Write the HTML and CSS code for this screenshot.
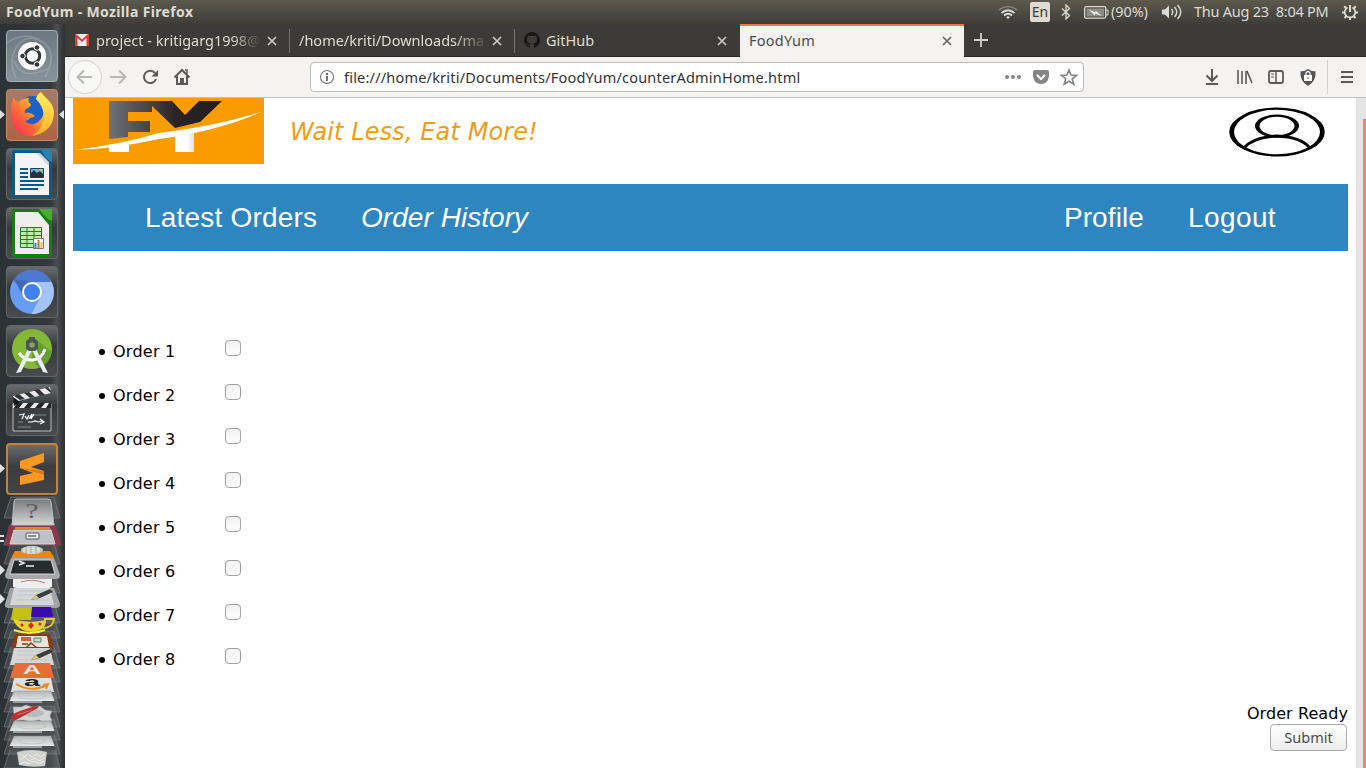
FILE: index.html
```html
<!DOCTYPE html>
<html lang="en">
<head>
<meta charset="utf-8">
<title>FoodYum</title>
<link rel="stylesheet" href="styles.css">
</head>
<body>
<header class="panel">
  <span class="panel-title">FoodYum - Mozilla Firefox</span>
  <div class="indicators">
    <svg class="ind-wifi" width="20" height="16" viewBox="0 0 20 16" fill="none" stroke-width="1.700"><path d="M1 6Q10-1 19 6" stroke="#86837b"/><path d="M3.500 9Q10 3.500 16.500 9M6 11.500Q10 8 14 11.500" stroke="#dfdbd2"/><path d="M8 13l2 2 2-2q-2-1.500-4 0z" fill="#dfdbd2"/></svg>
    <span class="lang">En</span>
    <svg class="ind-bt" width="10" height="16" viewBox="0 0 10 16" fill="none" stroke="#dfdbd2" stroke-width="1.300"><path d="M1 4.500l7.500 7L5 15V1l3.500 3.500L1 11.500"/></svg>
    <svg class="ind-bat" width="25" height="13" viewBox="0 0 25 13"><rect x=".7" y=".7" width="21" height="11.500" rx="1.500" fill="none" stroke="#dfdbd2" stroke-width="1.300"/><path d="M22 4h2v5h-2" fill="none" stroke="#dfdbd2"/><rect x="2.500" y="2.500" width="17.500" height="8" fill="#8f8c85"/><path d="M4.500 3.500l7 3V4.500l6.500 5.500-7-2.500v2z" fill="#f0ece4"/></svg>
    <span class="pct">(90%)</span>
    <svg class="ind-vol" width="21" height="16" viewBox="0 0 21 16" fill="none" stroke="#dfdbd2" stroke-width="1.400"><path d="M0 5.500h3l4-4v13l-4-4H0z" fill="#dfdbd2" stroke="none"/><path d="M9.500 5q2.500 3 0 6M12.500 3q4.500 5 0 10M15.500 1q6.500 7 0 14"/></svg>
    <span class="clock">Thu Aug 23&nbsp; 8:04 PM</span>
    <svg class="ind-gear" width="16" height="16" viewBox="0 0 16 16" fill="none" stroke="#dfdbd2"><path d="M5.500 3.500a5.300 5.300 0 1 0 5 0" stroke-width="1.700"/><path d="M8 1v7" stroke-width="2"/><path d="M2.200 2.200l2 2M13.800 2.200l-2 2M0 8.500h3M13 8.500h3M2.500 14l2-2M13.500 14l-2-2M8 13.500V16" stroke-width="2"/></svg>
  </div>
</header>
<div class="desktop">
  <aside class="launcher">
    <div class="tile tile-dash"><svg viewBox="6 30 52 52"><g fill="none" stroke="#b9c2c6" stroke-opacity=".35" stroke-width="1.500"><path d="M16 78C5 55 20 34 36 39S56 59 45 77M7 43Q25 30 43 42 55 51 49 69M14 60Q20 82 50 68"/></g><circle cx="32" cy="56" r="14" fill="#fff"/><circle cx="32.500" cy="56" r="7.200" fill="none" stroke="#33383b" stroke-width="3"/><g fill="#33383b" stroke="#fff"><circle cx="22.500" cy="56" r="2.800"/><circle cx="37" cy="47.500" r="2.800"/><circle cx="37" cy="64.500" r="2.800"/></g></svg></div>
    <div class="tile tile-fox"><svg viewBox="6 89 52 52"><defs><linearGradient id="ff" x1="1" x2="0" y1="0" y2="1"><stop offset="0" stop-color="#ffef55"/><stop offset=".35" stop-color="#ffa329"/><stop offset=".62" stop-color="#ff603b"/><stop offset="1" stop-color="#ed2166"/></linearGradient><linearGradient id="flame" x2="0" y2="1"><stop offset="0" stop-color="#fff261"/><stop offset="1" stop-color="#ffae27"/></linearGradient></defs><circle cx="33" cy="113" r="17" fill="#1b61c8"/><path d="M13 97q2 4 5 5 5-4 11-4-2 4 2 6 0 3-5 5-2 2-1 4 5-2 10 3-2 2-5 2-2 3-5 3 5 6 13 1 6-5 6-12 4 8 0 17-5 9-14 9-15-1-19-17-1-8 2-22z" fill="url(#ff)"/><path d="M36 99q1-5 5-7l4 5q8 6 9 15 0 20-22 24 11-7 12-20-1-10-8-17z" fill="url(#flame)"/></svg></div>
    <div class="tile tile-dark"><svg viewBox="6 148 52 52"><path d="M14 150h28l10 11v35q0 2-2 2H14q-2 0-2-2v-44q0-2 2-2z" fill="#075b8c"/><path d="M41 149.500h11V162q-5-1-11-12.500z" fill="#2980b3"/><path d="M15 153h23l11 12v30H15z" fill="#f2f3f4"/><path d="M36 153l13 13v-4l-9-9z" fill="#d2d6da"/><g fill="#075b8c"><path d="M20 168h8v2h-8zM20 172h8v2h-8zM20 176h8v2h-8zM20 180h24v2H20zM20 184h24v2H20zM20 188h18v2H20z"/></g><path d="M30.500 168.500h13v9h-13z" fill="#70b8e6" stroke="#163f59"/><path d="M31 177v-4l3-3 3 3 3-2 3 3v3z" fill="#273338"/><circle cx="41" cy="170" r="1.200" fill="#f6c735"/></svg></div>
    <div class="tile tile-dark"><svg viewBox="6 207 52 52"><path d="M14 209h28l10 11v35q0 2-2 2H14q-2 0-2-2v-44q0-2 2-2z" fill="#187d10"/><path d="M39 209h13v12q-5-1-13-12z" fill="#44b12e"/><path d="M15 212h23l11 13v29H15z" fill="#eee"/><path d="M20 227h22v20H20z" fill="#baf0aa"/><path d="M20.500 227.500h21v20h-21zM20 231.500h22M20 235.500h22M20 239.500h22M20 243.500h22M27 227v20M34 227v20" fill="none" stroke="#148313"/><path d="M33.500 238.500h10v10h-10z" fill="#fff" stroke="#777"/><path d="M34.500 243h2v5h-2z" fill="#1a8cd5"/><path d="M37.500 240h2v8h-2z" fill="#e06529"/><path d="M40.500 242h2v6h-2z" fill="#f1bf34"/></svg></div>
    <div class="tile tile-dark"><svg viewBox="6 266 52 52"><circle cx="32" cy="292" r="22" fill="#659df5"/><path d="M32 292L13 281a22 22 0 0 1 38 0z" fill="#4c78cf"/><path d="M32 282h19.500a22 22 0 0 1-20 32l9-17z" fill="#a4c3fb"/><path d="M14 279l9 17 9-5-1-9z" fill="#4268b6"/><circle cx="32" cy="292" r="9" fill="#3f82ee" stroke="#fff" stroke-width="2"/></svg></div>
    <div class="tile tile-dark"><svg viewBox="6 325 52 52"><circle cx="32" cy="349" r="20" fill="#83b936"/><path d="M33 337l19 15q-3 14-13 16l-7-9z" fill="#4f8b2d" opacity=".55"/><path d="M19 353q6 8 14 7 9-1 12-11" fill="none" stroke="#fff" stroke-width="3"/><path d="M29 347l3 3-11 22-5 1zM35 347l-3 3 11 22 5 1z" fill="#eceff0"/><path d="M29 339v-2h6v2l3 2v8l-3 2h-6l-3-2v-8z" fill="#4d5655"/><circle cx="32" cy="345" r="2.700" fill="#92a05e"/></svg></div>
    <div class="tile tile-dark"><svg viewBox="6 384 52 52"><path d="M13 404h38v27H13z" fill="#3d3e3f" stroke="#bbb"/><path d="M13 396l37-9 1 6-37 9z" fill="#ededed"/><path d="M19 394l6 5-5 1-6-4zM29 392l6 5-5 1-6-5zM39 389l6 6-5 1-6-6zM48 387l3 4v2l-6-5z" fill="#333"/><path d="M13 403h38v5H13z" fill="#eee"/><path d="M17 403h6l-4 5h-5zM28 403h6l-4 5h-6zM39 403h6l-4 5h-6zM49 403h2v5h-5z" fill="#252525"/><path d="M13 397l7 5-6 4z" fill="#111"/><path d="M19 415l5-1-2 5M25 416l2 3 2-4M29 419l3-5-1 5 3-5M28 422h4l3-1 3 1 5-1M40 419l4 3-4 2" fill="none" stroke="#fff" stroke-width="1.200"/><path d="M18 427h13M18 422h5M34 415h12" stroke="#888"/></svg></div>
    <div class="tile tile-sublime"><svg viewBox="6 443 52 52"><path d="M20 461l24-8v9l-13 5 13 4v9l-24 5v-9l13-3-13-5z" fill="#ff9821"/><path d="M20 468l24 3v4l-10-3z" fill="#df791c"/></svg></div>
    <svg class="stack" width="65" height="272" viewBox="0 496 65 272">
      <defs>
        <linearGradient id="steel" x2="0" y2="1"><stop offset="0" stop-color="#777a7b"/><stop offset="1" stop-color="#d5d6d7"/></linearGradient>
        <linearGradient id="lid" x2="0" y2="1"><stop offset="0" stop-color="#b4b6b7"/><stop offset="1" stop-color="#eceded"/></linearGradient>
        <g id="glass"><path d="M11 0h43l6 21H4z" fill="#a3a9ab" fill-opacity=".18" stroke="#7d8385" stroke-opacity=".6"/></g>
        <g id="drive"><path d="M14 0h37l4 11H9z" fill="url(#lid)" stroke="#848686" stroke-width=".5"/><ellipse cx="32" cy="5" rx="14" ry="3" fill="none" stroke="#bbb" stroke-width=".7"/><path d="M9 10h46v4q-21 2-46 0z" fill="#4b4f51"/><path d="M13 11h29" stroke="#eee"/></g>
        <g id="pencil"><path d="M14 0h36l4 17H10z" fill="#d4d6d7"/><path d="M18 3h27M17 7h24M16 12h34" stroke="#bcbfc2" stroke-width=".7"/><path d="M31 12l5-5 14-6 3 3-13 6z" fill="#3b3f39"/><path d="M31 12l5-5 3 3z" fill="#dfcc70"/></g>
      </defs>
      <use href="#glass" y="497"/><use href="#glass" y="524"/><use href="#glass" y="543"/><use href="#glass" y="572"/><use href="#glass" y="602"/><use href="#glass" y="617"/><use href="#glass" y="631"/><use href="#glass" y="647"/><use href="#glass" y="661"/><use href="#glass" y="677"/><use href="#glass" y="691"/><use href="#glass" y="706"/><use href="#glass" y="719"/><use href="#glass" y="733"/><use href="#glass" y="747"/>
      <path d="M9 525h46l6 17q0 4-4 4H9q-5 0-4-4z" fill="#88394c"/>
      <path d="M14 502q0-3 3-3h31q3 0 3 3l3 23H12z" fill="url(#steel)" stroke="#bcbdbe"/>
      <text x="32" y="518" class="question" textLength="13" lengthAdjust="spacingAndGlyphs">?</text>
      <path d="M15 527h35v2H15z" fill="#dc813c"/><path d="M14 530h37l4 14H10z" fill="#bfc1c2" stroke="#d6d6d6"/><rect x="26" y="533" width="13" height="6" rx="1" fill="#eee" stroke="#555"/><path d="M28 535h8v2h-8z" fill="#888"/>
      <path d="M15 551h35l4 6q0 2-3 2H14q-3 0-2-3z" fill="#ee8516"/><ellipse cx="32" cy="550" rx="11" ry="4" fill="#dbd9d5"/><path d="M22 548v5M26 547v6M31 546v7M36 547v6M41 548v5" stroke="#aaa"/>
      <path d="M11 558h43l6 17q0 4-4 4H9q-4 0-4-4z" fill="#a5a7a8"/><path d="M14 560h37l4 14H10z" fill="#262b2c" stroke="#d3d4d4"/><path d="M19 561l5 2-5 2M26 566h8" fill="none" stroke="#eee" stroke-width="1.500"/>
      <path d="M13 579h39v7q0 2-5 2H17q-5 0-4-3z" fill="#eee"/><path d="M21 582q12-4 24 1" fill="none" stroke="#cf7676"/>
      <path d="M10 588h44l6 16q0 4-4 4H9q-5 0-4-4z" fill="#a2a5a7"/><use href="#pencil" y="588"/>
      <path d="M13 608l20-1-2 13H11z" fill="#c2c114"/><path d="M32 607h19l2 10H31z" fill="#3b0cab"/><path d="M13 619q4 12 19 13 14-1 14-12-17 4-33-1z" fill="#e8d42d"/><path d="M44 619h10q-1 9-11 9" fill="none" stroke="#e8c824" stroke-width="2"/><g fill="#d32b2b"><circle cx="22" cy="625" r="1.500"/><path d="M31 622l3 3.500-3 3.500-3-3.500z"/><circle cx="40" cy="624" r="1.500"/></g><path d="M14 630q16 6 31 0" fill="none" stroke="#f6e859" stroke-width="2"/>
      <path d="M15 634h35l4 15H11z" fill="#873b19"/><path d="M18 636h29l2 11H16z" fill="#e9e4d9"/><path d="M21 637h10v4H21z" fill="#d46237"/><path d="M34 638h7v4h-7z" fill="#c7dac2" stroke="#568568"/><path d="M22 644h6M26 648l5-5 6 5" stroke="#873b19" fill="none" stroke-width="1.500"/>
      <use href="#pencil" y="648"/>
      <path d="M15 663h35l4 15H10z" fill="#e86c35"/><text x="32" y="673.500" class="store-letter" textLength="18" lengthAdjust="spacingAndGlyphs">A</text>
      <path d="M14 678h37l3 14H11z" fill="#dedfdf"/><text x="32" y="686" class="amazon-letter" textLength="16" lengthAdjust="spacingAndGlyphs">a</text><path d="M16 684q15 9 31 1M43 685l5-1-2 5" fill="none" stroke="#f18b1b" stroke-width="2"/>
      <use href="#drive" y="691"/>
      <path d="M13 707h8l5-2 6 2 8-1 5 4 7 1-2 5 2 5-9 1-4-2-8 2-8-2-8 1z" fill="#d3d5d5" stroke="#909394" stroke-width=".6"/><ellipse cx="33" cy="713" rx="11" ry="4" fill="#b7bbbc"/><path d="M11 717q2-4 9-6l15-5q5-1 3 2L16 720q-5 2-5-3z" fill="#bd3034"/><path d="M17 715l15-5" stroke="#e56660"/>
      <use href="#drive" y="721"/><use href="#drive" y="736"/>
      <path d="M17 752q15-4 30 0l-2 14q-13 2-26-1z" fill="#cfd0ce"/><path d="M20 754l4 3 3-3 5 3 4-3 5 3 4-3M20 760l5-3 4 4 6-3 4 3 5-3M20 764l4-2 5 2 5-3 5 3 5-3" fill="none" stroke="#eeeeeb"/>
      <g fill="#e1e2e2"><path d="M0 565l5 5-5 5zM0 594l5 5-5 5zM0 535h4v2H0zM0 540h4v2H0z"/></g>
    </svg>
    <svg class="arrows" viewBox="0 24 65 480"><g fill="#dfe1e1"><path d="M0 110l5 4.500-5 4.500zM64 110l-5 4.500 5 4.500zM0 464l5 4.500-5 4.500z"/></g></svg>
  </aside>
  <main class="browser">
    <div class="tabs">
      <div class="tab tab-gmail"><svg width="14" height="12" viewBox="0 0 14 12"><path d="M0 0h14v12H0z" fill="#eee"/><path d="M0 12V0h1l6 5.500L13 0h1v12h-2.500V4L7 8 2.500 4v8z" fill="#d93f35"/></svg><span class="tab-text fade t1">project - kritigarg1998@</span><svg class="close" width="10" height="10" viewBox="0 0 10 10"><path d="M1 1l8 8M9 1L1 9"/></svg></div>
      <div class="tab tab-file"><span class="tab-text fade t2">/home/kriti/Downloads/ma</span><svg class="close" width="10" height="10" viewBox="0 0 10 10"><path d="M1 1l8 8M9 1L1 9"/></svg></div>
      <div class="tab tab-git"><svg width="16" height="16" viewBox="0 0 16 16"><path fill="#161616" d="M8 0a8 8 0 0 0-2.500 15.600c.4.100.5-.2.500-.4v-1.500c-2.200.5-2.700-1-2.700-1-.4-.9-.9-1.200-.9-1.200-.7-.5.100-.5.100-.5.800.1 1.200.8 1.200.8.700 1.200 1.900.9 2.300.7.100-.5.300-.9.500-1.100-1.800-.2-3.600-.9-3.600-4 0-.9.300-1.600.8-2.100-.1-.2-.4-1 .1-2.100 0 0 .7-.2 2.200.8a7.700 7.700 0 0 1 4 0c1.500-1 2.200-.8 2.200-.8.500 1.100.2 1.900.1 2.100.5.600.8 1.300.8 2.100 0 3.100-1.900 3.800-3.700 4 .3.300.6.800.6 1.500v2.300c0 .2.100.5.500.4A8 8 0 0 0 8 0z"/></svg><span class="tab-text t3">GitHub</span><svg class="close" width="10" height="10" viewBox="0 0 10 10"><path d="M1 1l8 8M9 1L1 9"/></svg></div>
      <div class="tab active"><span class="tab-text t4">FoodYum</span><svg class="close" width="10" height="10" viewBox="0 0 10 10"><path d="M1 1l8 8M9 1L1 9"/></svg></div>
      <svg class="plus" width="14" height="14" viewBox="0 0 14 14"><path d="M7 0v14M0 7h14" stroke="#d3d0c9" stroke-width="1.800"/></svg>
    </div>
    <div class="toolbar">
      <svg class="nav-icons" width="130" height="40" viewBox="65 57 130 40" fill="none" stroke-width="2"><circle cx="85" cy="77" r="16.500" fill="#f8f8f7" stroke="#d5d4d2" stroke-width="1"/><path d="M92 77H78M84 70.500L77.500 77l6.500 6.500M110 77h15M119 70.500l6.500 6.500-6.500 6.500" stroke="#b8b8b6"/><path d="M155 73a6.200 6.200 0 1 0 1 6" stroke="#5b5b5b"/><path d="M158 70v6.500h-6.500z" fill="#5b5b5b"/><path d="M174.500 77.500l7.500-7.500 7.500 7.500M177 76v8h10v-8" stroke="#5b5b5b"/><path d="M180 78h4v6h-4z" fill="#5b5b5b"/><path d="M185 70h2v4" stroke="#5b5b5b" stroke-width="1.500"/></svg>
      <div class="url"><svg width="16" height="16" viewBox="0 0 16 16"><circle cx="8" cy="8" r="6.500" fill="none" stroke="#777" stroke-width="1.100"/><path d="M7 7h2v5H7zM7 4h2v2H7z" fill="#777"/></svg><span class="url-text">file:///home/kriti/Documents/FoodYum/counterAdminHome.html</span>
        <svg class="url-icons" width="76" height="20" viewBox="1003 67 76 20"><g fill="#858585"><circle cx="1007" cy="77" r="2"/><circle cx="1013" cy="77" r="2"/><circle cx="1019" cy="77" r="2"/><path d="M1035 70h12q2 0 2 2v4q-1 8-8 8t-8-8v-4q0-2 2-2z"/></g><path d="M1037 75l4 4 4-4" fill="none" stroke="#fff" stroke-width="2"/><path d="M1069 70l2 5 5.500.4-4.200 3.500 1.400 5.300-4.700-2.900-4.700 2.900 1.400-5.300-4.200-3.500 5.500-.4z" fill="none" stroke="#858585" stroke-width="1.700"/></svg>
      </div>
      <svg class="tools" width="156" height="40" viewBox="1200 57 156 40" fill="none" stroke="#5b5b5b" stroke-width="2"><path d="M1212 69v12M1206.500 75.500l5.500 5.500 5.500-5.500M1206 84h12"/><path d="M1238 70v14M1242 71v13M1246 71v13M1247 71l5 12" stroke-width="1.600"/><rect x="1269" y="71" width="14" height="12" rx="2" stroke-width="1.800"/><path d="M1276 71v12" stroke-width="1.500"/><path d="M1271 74h3M1271 77h3" stroke-width="1"/><path d="M1308 69q4 3 7.500 2 1 10-7.500 15-8.500-5-7.500-15 3.500 1 7.500-2z" fill="#555" stroke="none"/><path d="M1304 75h8v6h-8z" fill="#fff" stroke="none"/><path d="M1306 76v-3q2-3 4 0v3" stroke="#fff" stroke-width="1.300"/><path d="M1308 77v2" stroke-width="1"/><path d="M1327.500 60v34" stroke="#d2d1cf" stroke-width="1"/><path d="M1341 72h12M1341 77h12M1341 82h12"/></svg>
    </div>
    <div class="viewport">
      <div class="page">
        <div class="brand">
          <svg class="logo" width="191" height="66" viewBox="73 98 191 66"><defs><linearGradient id="metal"><stop offset="0" stop-color="#70717a"/><stop offset=".6" stop-color="#2a2325"/><stop offset="1" stop-color="#201e1f"/></linearGradient><radialGradient id="glow" cx=".5" cy=".8" r=".5"><stop offset="0" stop-color="#f5b000"/><stop offset="1" stop-color="#fa9c00"/></radialGradient><linearGradient id="pearl"><stop offset=".6" stop-color="#fff"/><stop offset="1" stop-color="#e2e2e2"/></linearGradient></defs><path d="M73 98h191v66H73z" fill="#fa9c00"/><ellipse cx="169" cy="166" rx="73" ry="12" fill="url(#glow)"/><path d="M109 101h63l13 14 14-14h23l-22 21-25 6-23-22v6h-24v9h22v11h-22v5l-19 2z" fill="url(#metal)"/><path d="M109 145l20-3v10h-20z" fill="#fff"/><path d="M175 134l19-4v22h-19z" fill="url(#pearl)"/><path d="M75 150q42-5 84-17 57-7 102-21-43 19-102 27-45 10-84 11z" fill="#fff"/></svg>
          <span class="slogan">Wait Less, Eat More!</span>
          <svg class="avatar" width="98" height="52" viewBox="1228 106 98 52" fill="none" stroke="#000"><path fill="#000" stroke="none" fill-rule="evenodd" d="M1229.300 132a47.700 24.500 0 1 0 95.400 0a47.700 24.500 0 1 0-95.400 0zM1234 132a43 22.300 0 1 0 86 0a43 22.300 0 1 0-86 0zM1255 126a22 11.500 0 1 0 44 0a22 11.500 0 1 0-44 0zM1259.500 126a17.500 9.300 0 1 0 35 0a17.500 9.300 0 1 0-35 0z"/><path d="M1244 148q9-11 33-12 24 1 33 12" stroke-width="2.800"/></svg>
        </div>
        <nav class="site-nav"><span class="latest">Latest Orders</span><span class="history">Order History</span><span class="profile">Profile</span><span class="logout">Logout</span></nav>
        <ul class="orders">
          <li><span>Order 1</span><i class="box"></i></li><li><span>Order 2</span><i class="box"></i></li><li><span>Order 3</span><i class="box"></i></li><li><span>Order 4</span><i class="box"></i></li><li><span>Order 5</span><i class="box"></i></li><li><span>Order 6</span><i class="box"></i></li><li><span>Order 7</span><i class="box"></i></li><li><span>Order 8</span><i class="box"></i></li>
        </ul>
        <div class="ready"><span>Order Ready</span><button class="submit">Submit</button></div>
      </div>
      <div class="scroll"><div class="thumb"></div></div>
    </div>
  </main>
</div>
</body>
</html>
```
FILE: styles.css
```css
*{box-sizing:border-box}
body{margin:0;width:1366px;height:768px;overflow:hidden;background:#fff;font-family:"Noto Sans","DejaVu Sans",sans-serif;white-space:nowrap}
svg{display:block;flex:none}
.panel{height:24px;display:flex;align-items:center;justify-content:space-between;padding:0 8px 0 6px;background:linear-gradient(#5d594e,#3e3d39);color:#dfdbd2}
.panel-title{font-weight:700;font-size:14px;letter-spacing:.36px;line-height:20px}
.indicators{display:flex;align-items:center;font-size:14.500px}
.indicators span:not(.lang){line-height:20px;padding-bottom:2px}
.lang{width:20px;height:20px;margin-left:12px;background:#dfdbd2;color:#3e3d39;border-radius:2px;font-size:14px;line-height:20px;text-align:center}
.ind-bt{margin-left:11px}
.ind-bat{margin-left:13px}
.pct{width:40px;margin-left:2px;letter-spacing:-.1px}
.ind-vol{margin-left:11px}
.clock{width:136px;margin-left:11px;letter-spacing:-.25px}
.ind-gear{margin-left:12px}
.desktop{display:flex;height:744px}
.launcher{position:relative;width:65px;flex:none;padding:6px 0 0 6px;background:linear-gradient(90deg,#2b3236,#33393c 78%,#4b4f51 88%,#2b2f32);display:flex;flex-direction:column;gap:7px;overflow:hidden}
.tile{width:52px;height:52px;flex:none;border-radius:4px;border:1px solid #72787a;overflow:hidden}
.tile svg{width:52px;height:52px;margin:-1px}
.tile-dash{background:linear-gradient(#6c7980,#87939a);border-color:#a6afb3}
.tile-fox{background:linear-gradient(#a57b69,#ae6543);border-color:#c98a6c}
.tile-dark{background:linear-gradient(#676b6d,#35393b 40%,#484c4e);border-color:#606567}
.tile-sublime{background:linear-gradient(#696b6d,#3b3d40 45%,#414346);border:2px solid #c28141}
.tile-sublime svg{margin:-2px}
.stack{margin:-6px 0 0 -6px}
.arrows{position:absolute;left:0;top:0;width:65px;height:480px}
.question{font:21px "Liberation Serif",serif;text-anchor:middle;fill:#5b5f61}
.store-letter{font:700 12px "Liberation Sans",sans-serif;text-anchor:middle;fill:#f3e9e0}
.amazon-letter{font:700 13px "Liberation Sans",sans-serif;text-anchor:middle;fill:#222}
.browser{width:1301px;display:flex;flex-direction:column}
.tabs{height:33px;background:#3c3b37;display:flex;border-bottom:1px solid #282825}
.tab{width:225px;display:flex;align-items:center;position:relative;color:#dfdbd2}
.tab-gmail{padding-left:10px}
.tab-file,.tab-git{padding-left:9px}
.tab-gmail:after,.tab-file:after{content:"";position:absolute;right:0;top:5px;width:1px;height:24px;background:#74726c}
.tab-text{font-size:14.500px;line-height:20px}
.tab-gmail .tab-text{margin-left:7px;width:165px}
.tab-file .tab-text{width:190px}
.tab-git .tab-text{margin-left:6px}
.fade{overflow:hidden;-webkit-mask-image:linear-gradient(90deg,#000 82%,transparent)}
.close{position:absolute;right:13px;top:12px;fill:none;stroke:#cdcac3;stroke-width:1.700}
.active{width:224px;height:33px;background:#f4f3f1;border-top:2px solid #f07746;padding:0 0 3px 9px;color:#4c4c4c}
.t4{letter-spacing:.25px}
.active .close{top:10px;right:12px;stroke:#666}
.plus{margin:9px 0 0 10px}
.toolbar{height:41px;background:#f4f3f1;border-bottom:1px solid #c3c1bd;display:flex;align-items:flex-start}
.url{width:774px;height:30px;margin:5px 0 0 115px;border:1px solid #bebdba;border-radius:4px;background:#fff;display:flex;align-items:center;padding:0 4px 0 8px;color:#333}
.url-text{font-size:14.500px;margin-left:9px;letter-spacing:.2px}
.url-icons{margin-left:auto}
.tools{margin-left:116px}
.viewport{height:670px;display:flex;font-family:"DejaVu Sans",sans-serif}
.page{width:1291px;padding:0 8px;display:flex;flex-direction:column}
.brand{height:86px;display:flex;align-items:flex-start}
.slogan{font-size:24px;font-style:oblique;letter-spacing:.1px;color:#f39c12;margin:19px 0 0 26px;line-height:30px;width:260px}
.avatar{margin:8px 22px 0 auto}
.site-nav{height:67px;background:#2e86c1;color:#fff;display:flex;align-items:center;padding:0 72px;font:28px "Liberation Sans",sans-serif}
.latest{width:172px;letter-spacing:.2px}
.history{font-style:italic;margin-left:44px;letter-spacing:.05px}
.profile{margin-left:auto;letter-spacing:.1px}
.logout{width:88px;margin-left:44px;letter-spacing:.4px}
.orders{margin:79px 0 0;padding:0 0 0 25px;list-style:none;font-size:16px}
.orders li{height:44px;line-height:44px;display:flex;align-items:center}
.orders li:before{content:"";width:6px;height:6px;border-radius:50%;background:#000;margin:0 8px 0 1px;flex:none}
.orders span{width:112px;letter-spacing:.25px}
.box{width:16px;height:16px;border:1px solid #a0a0a0;border-radius:4px;background:linear-gradient(#f3f3f3,#fff);margin:-9px 0 0}
.ready{display:flex;flex-direction:column;align-items:flex-end;margin-top:22px;font-size:16px;line-height:19px}
.ready span{letter-spacing:.08px}
.submit{width:77px;height:27px;margin:1px 1px 0 0;border:1px solid #aaa;border-radius:4px;background:linear-gradient(#fff,#ededed);color:#4c4c4c;font:14.500px "Noto Sans",sans-serif;padding:0 0 2px}
.scroll{width:10px;background:#e5e5e5;padding:21px 0 0 7px}
.thumb{width:3px;height:649px;background:#f08763}
```
